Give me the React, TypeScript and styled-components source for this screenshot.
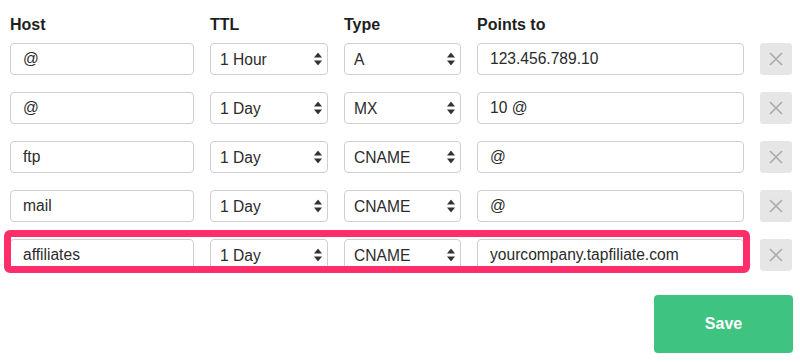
import React from 'react'
import styled, { createGlobalStyle } from 'styled-components'

type Record = {
    host: string,
    ttl: string,
    type: string,
    points: string,
    marked?: boolean
}

const records: Record[] = [
    { host: '@', ttl: '1 Hour', type: 'A', points: '123.456.789.10' },
    { host: '@', ttl: '1 Day', type: 'MX', points: '10 @' },
    { host: 'ftp', ttl: '1 Day', type: 'CNAME', points: '@' },
    { host: 'mail', ttl: '1 Day', type: 'CNAME', points: '@' },
    { host: 'affiliates', ttl: '1 Day', type: 'CNAME', points: 'yourcompany.tapfiliate.com', marked: true },
]

const ttlOptions = ['1 Hour', '1 Day']
const typeOptions = ['A', 'MX', 'CNAME']

const GlobalStyle = createGlobalStyle`
    body {
        margin: 0;
        background: #fff;
        font-family: "Liberation Sans", Arial, sans-serif;
        color: #222;
    }
`

const PageStyle = styled.div`
    padding: 15px 7px 0 10px;
    width: 783px;
`

const columns = '184px 118px 117px 267px 32px'

const HeadStyle = styled.div`
    display: grid;
    grid-template-columns: ${columns};
    column-gap: 16px;
    height: 20px;
    margin-bottom: 8px;
`

const LabelStyle = styled.span`
    font-size: 16px;
    line-height: 20px;
    font-weight: bold;
    color: #1e1e1e;
`

const ListStyle = styled.div`
    display: flex;
    flex-direction: column;
    gap: 17px;
`

const RowStyle = styled.div<{ $marked?: boolean }>`
    position: relative;
    display: grid;
    grid-template-columns: ${columns};
    column-gap: 16px;
    &::after {
        content: "";
        display: ${p => (p.$marked ? 'block' : 'none')};
        position: absolute;
        top: -9px;
        left: -6px;
        right: 43px;
        bottom: -2px;
        border: 7px solid #ff2e6b;
        border-radius: 6px;
        pointer-events: none;
    }
`

const InputStyle = styled.input`
    box-sizing: border-box;
    width: 100%;
    height: 32px;
    padding: 0 12px;
    border: 1px solid #cfcfcf;
    border-radius: 4px;
    font-family: "Liberation Sans", Arial, sans-serif;
    font-size: 15.6px;
    color: #2b2b2b;
    background: #fff;
    outline: none;
`

const SelectWrap = styled.div`
    position: relative;
    height: 32px;
`

const SelectStyle = styled.select`
    box-sizing: border-box;
    appearance: none;
    -webkit-appearance: none;
    width: 100%;
    height: 32px;
    padding: 0 9px;
    border: 1px solid #cfcfcf;
    border-radius: 4px;
    font-family: "Liberation Sans", Arial, sans-serif;
    font-size: 15.6px;
    color: #2b2b2b;
    background: #fff;
    outline: none;
`

const ArrowsStyle = styled.svg`
    position: absolute;
    right: 6px;
    top: 50%;
    transform: translateY(-50%);
    pointer-events: none;
`

const RemoveStyle = styled.button`
    width: 32px;
    height: 32px;
    padding: 0;
    border: none;
    border-radius: 3px;
    background: #e6e6e6;
    display: flex;
    align-items: center;
    justify-content: center;
    cursor: pointer;
`

const FootStyle = styled.div`
    display: flex;
    justify-content: flex-end;
    margin-top: 24px;
`

const SaveStyle = styled.button`
    width: 139px;
    height: 58px;
    border: none;
    border-radius: 4px;
    background: #3fc381;
    color: #fff;
    font-family: "Liberation Sans", Arial, sans-serif;
    font-size: 16px;
    font-weight: bold;
    cursor: pointer;
`

const Select: React.FC<{ value: string, options: string[] }> = ({ value, options }) => (
    <SelectWrap>
        <SelectStyle defaultValue={value}>
            {options.map(o => <option key={o}>{o}</option>)}
        </SelectStyle>
        <ArrowsStyle width="8" height="13" viewBox="0 0 8 13">
            <path d="M4 0 L8 5 L0 5 Z" fill="#333" />
            <path d="M0 8 L8 8 L4 13 Z" fill="#333" />
        </ArrowsStyle>
    </SelectWrap>
)

export default function App() {
    return (
        <PageStyle>
            <GlobalStyle />
            <HeadStyle>
                <LabelStyle>Host</LabelStyle>
                <LabelStyle>TTL</LabelStyle>
                <LabelStyle>Type</LabelStyle>
                <LabelStyle>Points to</LabelStyle>
            </HeadStyle>
            <ListStyle>
                {records.map((r, i) => (
                    <RowStyle key={i} $marked={r.marked}>
                        <InputStyle defaultValue={r.host} />
                        <Select value={r.ttl} options={ttlOptions} />
                        <Select value={r.type} options={typeOptions} />
                        <InputStyle defaultValue={r.points} />
                        <RemoveStyle aria-label="Remove">
                            <svg width="14" height="14" viewBox="0 0 14 14">
                                <path d="M1 1 L13 13 M13 1 L1 13" stroke="#ababab" strokeWidth="1.6" />
                            </svg>
                        </RemoveStyle>
                    </RowStyle>
                ))}
            </ListStyle>
            <FootStyle>
                <SaveStyle>Save</SaveStyle>
            </FootStyle>
        </PageStyle>
    )
}
